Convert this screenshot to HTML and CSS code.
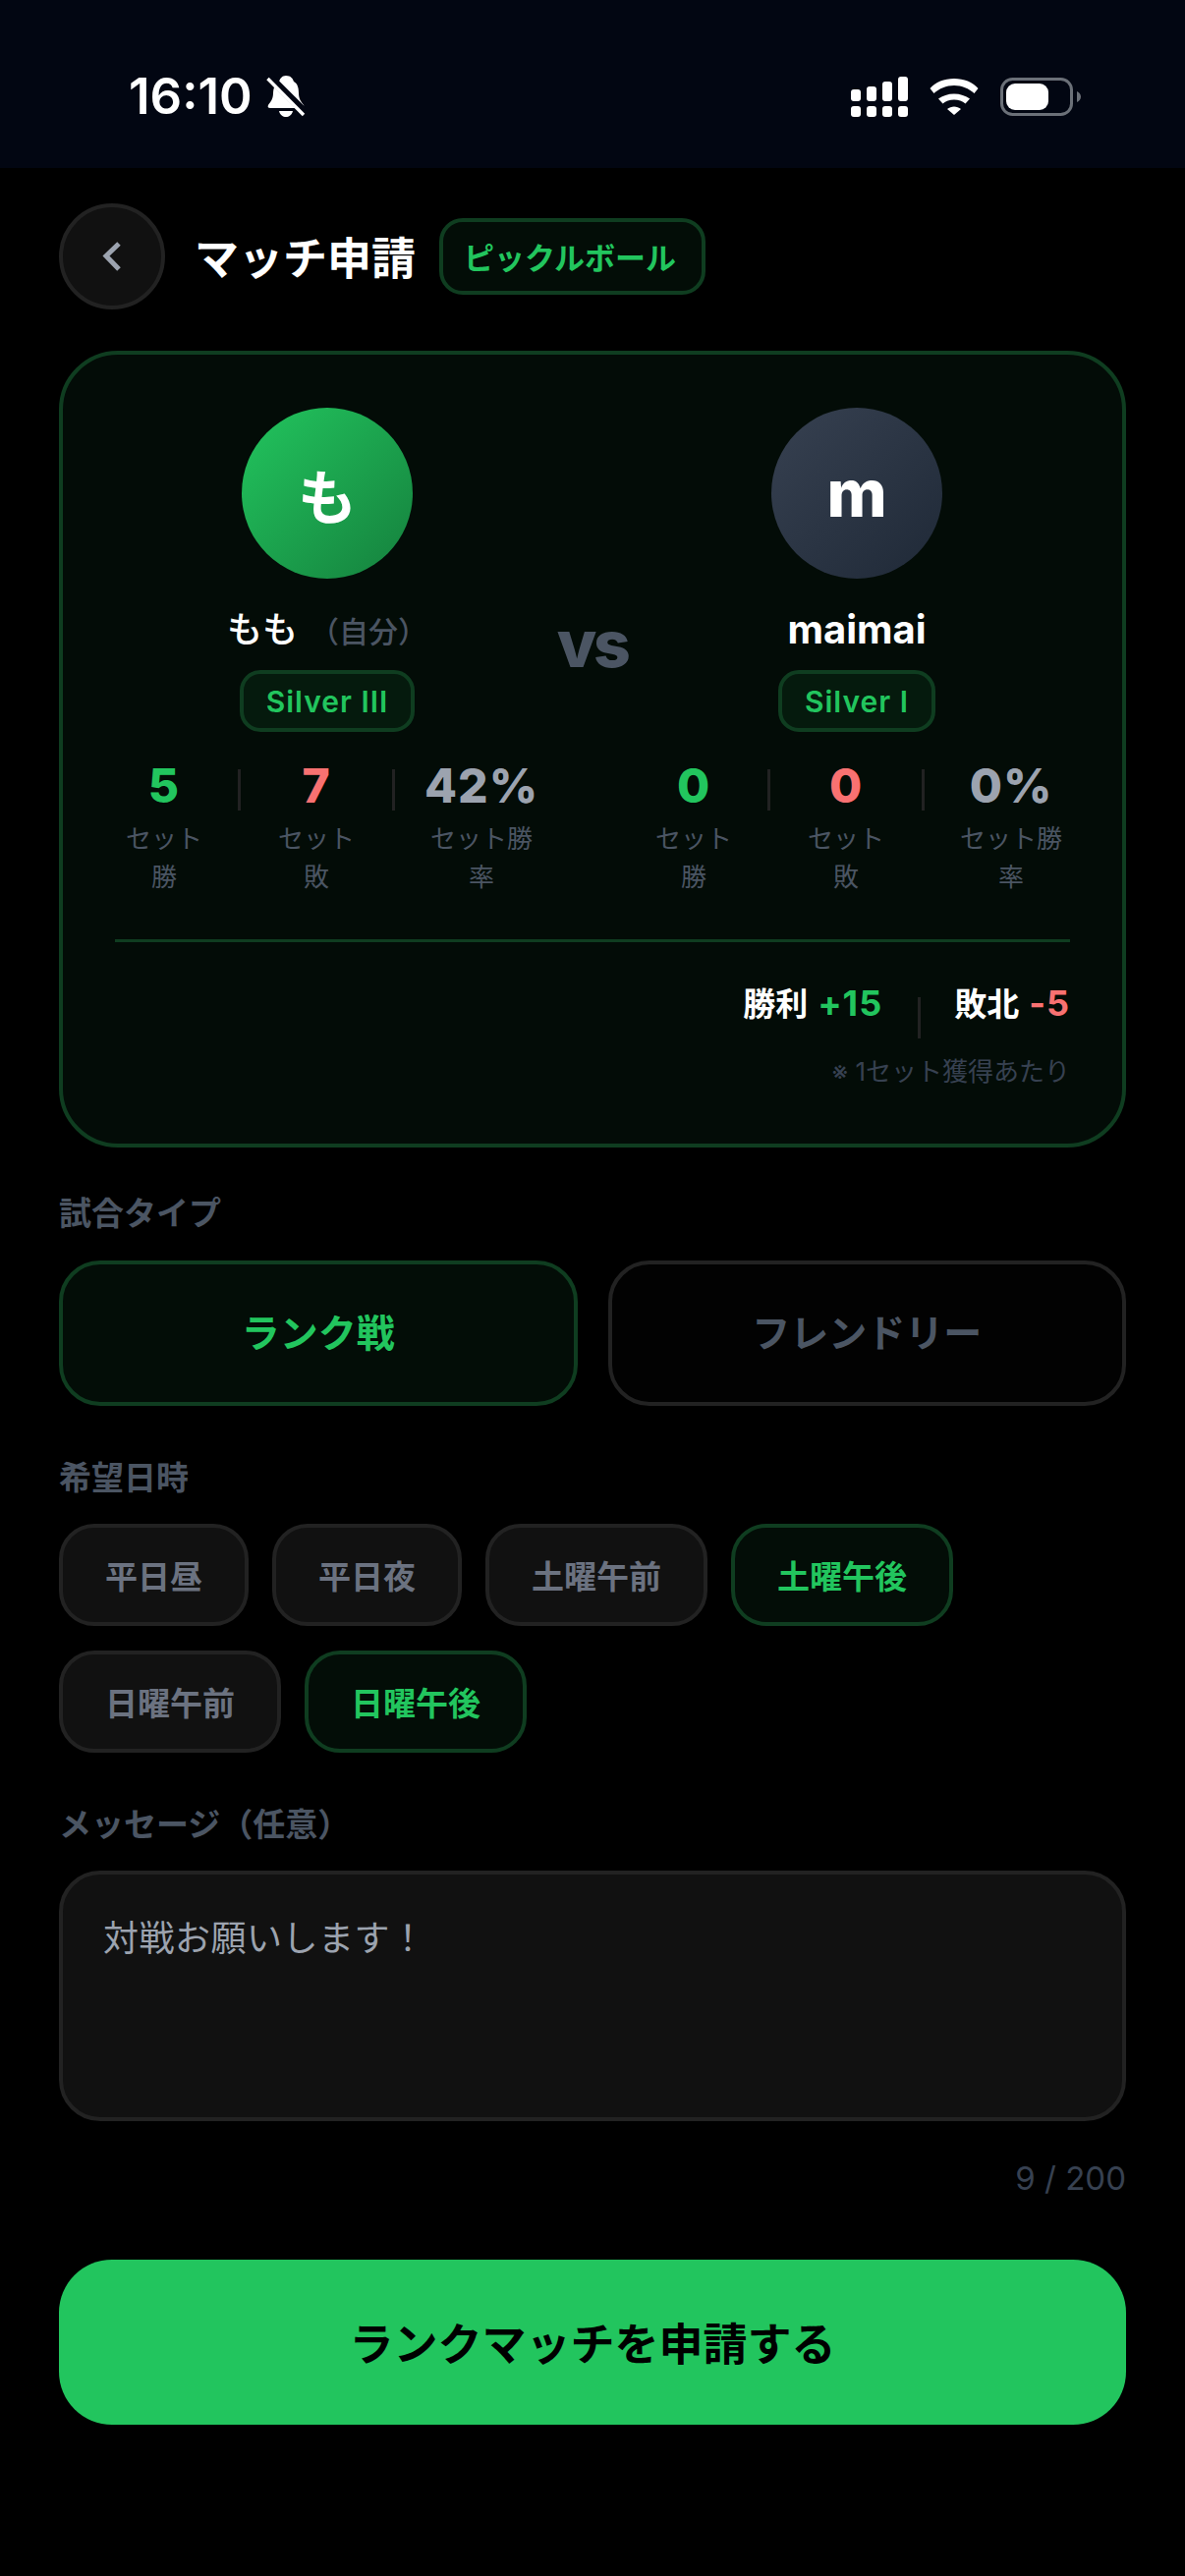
FILE: index.html
```html
<!DOCTYPE html>
<html lang="ja">
<head>
  <meta charset="UTF-8">
  <title>マッチ申請</title>
  <link rel="stylesheet" href="styles.css">
</head>
<body>
  <div class="status-bar">
    <div class="status-left">
      <span class="status-time">16:10</span>
      <svg class="icon-bell" width="40" height="42" viewBox="0 0 40 42">
        <path fill="#fff" d="M20 0C25 0 27 3 28 6C32 8 33 13 33 18C33 24 36 27 38 30C39 32 38 33 36 33H4C2 33 1 32 2 30C4 27 7 24 7 18C7 13 9 8 13 6C14 3 16 0 20 0Z"/>
        <path fill="#fff" d="M13 36H27C26 40 23 42 20 42C17 42 14 40 13 36Z"/>
        <line x1="3" y1="1" x2="39" y2="37" stroke="#020612" stroke-width="8"/>
        <line x1="1.500" y1="3" x2="38" y2="40" stroke="#fff" stroke-width="3.400"/>
      </svg>
    </div>
    <div class="status-right">
      <svg width="58" height="41" viewBox="0 0 58 41" fill="#fff">
        <rect x="0" y="13" width="10" height="12" rx="3"/>
        <rect x="16" y="10" width="10" height="15" rx="3"/>
        <rect x="32" y="5" width="10" height="20" rx="3"/>
        <rect x="48" y="0" width="10" height="25" rx="3"/>
        <rect x="0" y="30" width="10" height="11" rx="3"/>
        <rect x="16" y="30" width="10" height="11" rx="3"/>
        <rect x="32" y="30" width="10" height="11" rx="3"/>
        <rect x="48" y="30" width="10" height="11" rx="3"/>
      </svg>
      <svg width="50" height="37" viewBox="0 0 50 37" fill="#fff">
        <path d="M.5 10C6 3.500 15 0 25 0C35 0 44 3.500 49.500 10L45.500 15C40 10 33 7 25 7C17 7 10 10 4.500 15Z"/>
        <path d="M9 20.500C13 17.500 19 15.500 25 15.500C31 15.500 37 17.500 41 20.500L36.500 25.500C33.500 23 29.500 21.500 25 21.500C20.500 21.500 16.500 23 13.500 25.500Z"/>
        <path d="M18 31C20 29.500 22.500 28.500 25 28.500C27.500 28.500 30 29.500 32 31L25 37Z"/>
      </svg>
      <svg width="82" height="39" viewBox="0 0 82 39">
        <rect x="1.500" y="1.500" width="71" height="36" rx="11" fill="none" stroke="#6b7078" stroke-width="3"/>
        <rect x="6" y="6" width="43" height="27" rx="9" fill="#fff"/>
        <path d="M78 14C80.500 15 82 17 82 19.500C82 22 80.500 24 78 25Z" fill="#6b7078"/>
      </svg>
    </div>
  </div>

  <div class="page">
    <div class="top-row">
      <div class="back-btn">
        <svg width="24" height="36" viewBox="0 0 24 36" fill="none">
          <path d="M19 5L6 17.500L19 31" stroke="#9ca3af" stroke-width="5"/>
        </svg>
      </div>
      <div class="page-title">マッチ申請</div>
      <div class="sport-pill">ピックルボール</div>
    </div>

    <div class="match-card">
      <div class="players">
        <div class="player">
          <div class="avatar avatar-green">も</div>
          <div class="player-name">もも<span class="self-tag">（自分）</span></div>
          <div class="rank-badge">Silver III</div>
          <div class="stats">
            <div class="stat"><div class="stat-value win">5</div><div class="stat-label">セット勝</div></div>
            <div class="stat-divider"></div>
            <div class="stat"><div class="stat-value lose">7</div><div class="stat-label">セット敗</div></div>
            <div class="stat-divider"></div>
            <div class="stat stat-wide"><div class="stat-value rate">42%</div><div class="stat-label">セット勝率</div></div>
          </div>
        </div>
        <div class="versus">vs</div>
        <div class="player">
          <div class="avatar avatar-gray">m</div>
          <div class="player-name name-latin">maimai</div>
          <div class="rank-badge">Silver I</div>
          <div class="stats">
            <div class="stat"><div class="stat-value win">0</div><div class="stat-label">セット勝</div></div>
            <div class="stat-divider"></div>
            <div class="stat"><div class="stat-value lose">0</div><div class="stat-label">セット敗</div></div>
            <div class="stat-divider"></div>
            <div class="stat stat-wide"><div class="stat-value rate">0%</div><div class="stat-label">セット勝率</div></div>
          </div>
        </div>
      </div>
      <div class="card-foot">
        <div class="points">
          <div class="point">勝利<span class="point-num win">+15</span></div>
          <div class="point-divider"></div>
          <div class="point">敗北<span class="point-num lose">-5</span></div>
        </div>
        <div class="points-note">※ 1セット獲得あたり</div>
      </div>
    </div>

    <div class="section-label label-type">試合タイプ</div>
    <div class="type-row">
      <div class="type-btn selected">ランク戦</div>
      <div class="type-btn">フレンドリー</div>
    </div>

    <div class="section-label">希望日時</div>
    <div class="chips">
      <div class="chip">平日昼</div>
      <div class="chip">平日夜</div>
      <div class="chip">土曜午前</div>
      <div class="chip selected">土曜午後</div>
      <div class="chip">日曜午前</div>
      <div class="chip selected">日曜午後</div>
    </div>

    <div class="section-label">メッセージ（任意）</div>
    <div class="message-box">対戦お願いします！</div>
    <div class="char-count">9 / 200</div>

    <div class="submit-btn">ランクマッチを申請する</div>
  </div>
</body>
</html>
```

FILE: styles.css
```css
* {
  box-sizing: border-box;
}

body {
  margin: 0;
  background: #000;
  color: #fff;
  font-family: Inter, "Noto Sans CJK JP", sans-serif;
}

/* status bar */
.status-bar {
  height: 171px;
  padding: 77px 106px 0 131px;
  background: #020612;
  display: flex;
  justify-content: space-between;
  align-items: flex-start;
}

.status-left,
.status-right {
  height: 42px;
  display: flex;
  align-items: center;
}

.status-left {
  gap: 14px;
}

.status-right {
  gap: 22px;
}

.status-time {
  font-size: 51px;
  font-weight: 600;
  line-height: 42px;
}

/* page */
.page {
  padding: 36px 60px 0;
}

.top-row {
  display: flex;
  align-items: center;
}

.back-btn {
  width: 108px;
  height: 108px;
  border-radius: 50%;
  background: #111;
  border: 4px solid #222;
  display: flex;
  align-items: center;
  justify-content: center;
}

.page-title {
  margin: 0 24px 2px 30px;
  font-size: 45px;
  font-weight: 700;
}

.sport-pill {
  height: 78px;
  padding: 0 0 2px 21px;
  width: 271px;
  display: flex;
  align-items: center;
  font-size: 31px;
  font-weight: 700;
  color: #22c55e;
  background: #030d07;
  border: 4px solid #0f3d20;
  border-radius: 24px;
}

/* match card */
.match-card {
  margin-top: 42px;
  padding-top: 54px;
  height: 811px;
  background: #030c07;
  border: 4px solid #0f3d20;
  border-radius: 60px;
}

.players {
  padding: 0 25px 0 24px;
  display: grid;
  grid-template-columns: 490px minmax(0, 1fr) 490px;
}

.player {
  display: flex;
  flex-direction: column;
  align-items: center;
}

.avatar {
  width: 174px;
  height: 174px;
  border-radius: 50%;
  display: flex;
  align-items: center;
  justify-content: center;
  font-size: 60px;
  font-weight: 700;
}

.avatar-green {
  background: linear-gradient(135deg, #22c55e, #15803d);
}

.avatar-gray {
  font-size: 66px;
  font-weight: 800;
  background: linear-gradient(135deg, #374151, #1f2937);
}

.player-name {
  margin-top: 25px;
  height: 54px;
  line-height: 54px;
  font-size: 36px;
  font-weight: 500;
}

.name-latin {
  font-size: 40px;
  font-weight: 700;
}

.self-tag {
  margin-left: 12px;
  font-size: 30px;
  font-weight: 500;
  color: #4b5563;
}

.rank-badge {
  margin-top: 14px;
  height: 63px;
  padding: 0 23px;
  display: flex;
  align-items: center;
  font-size: 30px;
  font-weight: 600;
  letter-spacing: 1px;
  color: #22c55e;
  background: #051a0d;
  border: 4px solid #0f3d20;
  border-radius: 21px;
}

.stats {
  margin-top: 31px;
  width: 490px;
  display: flex;
  align-items: flex-start;
}

.stat {
  width: 154px;
  padding: 0 27px;
  text-align: center;
}

.stat:first-child {
  padding: 0 25px 0 29px;
}

.stat-wide {
  width: 176px;
  padding: 0 30px;
}

.stat-value {
  margin: 0 -20px;
  font-size: 48px;
  font-weight: 800;
  line-height: 48px;
  letter-spacing: 1px;
}

.stat-label {
  margin-top: 10px;
  font-size: 26px;
  line-height: 39px;
  color: #4b5563;
}

.stat-divider {
  flex: none;
  width: 3px;
  height: 42px;
  margin-top: 7px;
  background: #222;
}

.win {
  color: #22c55e;
}

.lose {
  color: #f87171;
}

.rate {
  color: #9ca3af;
}

.versus {
  margin-top: 210px;
  height: 60px;
  display: flex;
  align-items: center;
  justify-content: center;
  font-size: 66px;
  font-weight: 800;
  letter-spacing: -3.5px;
  color: #4b5563;
  white-space: nowrap;
}

.card-foot {
  margin: 44px 53px 0;
  padding-top: 44px;
  border-top: 3px solid #0f3d20;
}

.points {
  display: flex;
  justify-content: flex-end;
  align-items: flex-start;
}

.point {
  font-size: 33px;
  font-weight: 700;
  line-height: 36px;
}

.point-num {
  margin-left: 10px;
  font-size: 36px;
  font-weight: 700;
  letter-spacing: 1px;
}

.point-divider {
  width: 3px;
  height: 42px;
  margin: 12px 34px 0 36px;
  background: #222;
}

.points-note {
  margin-top: 16px;
  font-size: 26px;
  line-height: 36px;
  text-align: right;
  color: #374151;
}

/* form */
.section-label {
  margin: 52px 0 26px;
  font-size: 33px;
  font-weight: 700;
  line-height: 42px;
  color: #4b5563;
}

.label-type {
  margin-top: 46px;
  margin-bottom: 27px;
}

.type-row {
  display: flex;
  gap: 31px;
}

.type-btn {
  flex: 1;
  height: 148px;
  padding-bottom: 6px;
  display: flex;
  align-items: center;
  justify-content: center;
  font-size: 39px;
  font-weight: 700;
  color: #4b5563;
  background: #020202;
  border: 4px solid #222;
  border-radius: 42px;
}

.type-btn.selected {
  color: #22c55e;
  background: #030d07;
  border-color: #0f3d20;
}

.chips {
  display: flex;
  flex-wrap: wrap;
  gap: 25px 24px;
  width: 960px;
}

.chip {
  height: 104px;
  padding: 0 43px;
  display: flex;
  align-items: center;
  font-size: 33px;
  font-weight: 700;
  color: #6b7280;
  background: #111;
  border: 4px solid #222;
  border-radius: 36px;
}

.chip.selected {
  color: #22c55e;
  background: #030d07;
  border-color: #0f3d20;
}

.message-box {
  height: 255px;
  padding: 38px 41px;
  font-size: 36px;
  line-height: 54px;
  letter-spacing: .5px;
  color: #9ca3af;
  background: #111;
  border: 4px solid #222;
  border-radius: 42px;
}

.char-count {
  margin-top: 37px;
  font-size: 33px;
  line-height: 42px;
  text-align: right;
  color: #374151;
}

.submit-btn {
  margin-top: 62px;
  height: 168px;
  padding-bottom: 2px;
  display: flex;
  align-items: center;
  justify-content: center;
  font-size: 45px;
  font-weight: 700;
  color: #000;
  background: #22c55e;
  border-radius: 54px;
}
```
